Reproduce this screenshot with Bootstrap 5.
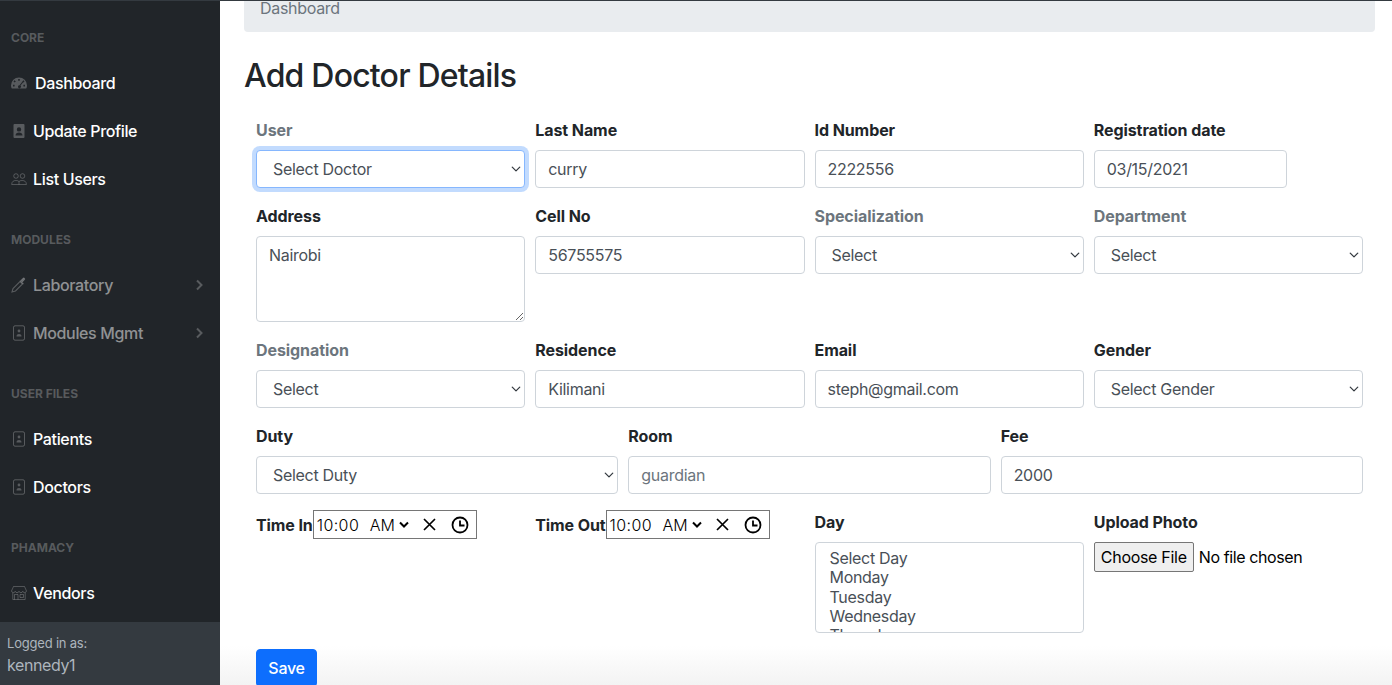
<!doctype html>
<html lang="en">
<head>
<meta charset="utf-8">
<title>Add Doctor Details</title>
<link rel="stylesheet" href="https://cdn.jsdelivr.net/npm/bootstrap@5.3.0/dist/css/bootstrap.min.css">
<style>
html,body{height:100%;overflow:hidden}
body{font-family:Inter,"Liberation Sans",sans-serif;font-size:16px;color:#212529;background:#fff}
.top-edge{height:1px;background:#343a40}
.shell{height:684px}
.side-nav{width:220px;flex:none;background:#212529}
.side-menu{flex:1 1 auto;overflow:hidden}
.side-head{padding:28px 11px 12px;font-size:12px;line-height:18px;font-weight:700;color:rgba(255,255,255,.25);text-transform:uppercase}
.side-link{display:flex;align-items:center;height:48px;padding:0 16px 0 11px;color:#fff;text-decoration:none;font-weight:500;letter-spacing:-.35px}
.side-link.muted{color:rgba(255,255,255,.5)}
.side-ico{width:22px;height:16px;flex:none;color:rgba(255,255,255,.25);display:block}
.side-ico svg{display:block;width:16px;height:16px}
.wide-ico{width:24px}
.side-arrow{margin-left:auto;width:9px;height:12px;color:rgba(255,255,255,.25)}
.side-foot{height:63px;flex:none;background:#343a40;color:#adb5bd;padding:11px 7px 0}
.side-foot div:first-child{font-size:13px;line-height:21px;letter-spacing:-.2px}
.side-foot div:last-child{font-size:16px;line-height:23px;letter-spacing:-.4px}
.main-pane{flex:1 1 auto;min-width:0;overflow:hidden;padding:0 17px 0 24px;background:linear-gradient(to bottom,#fff 0,#fff 645px,#f3f3f3 684px)}
.crumb-bar{margin:-17px 0 25px;padding:12px 16px;height:48px;background:#e9ecef;border-radius:4px;color:#6c757d;line-height:24px;letter-spacing:-.3px}
.page-title{font-size:32px;line-height:38px;font-weight:500;margin:0 0 23px;letter-spacing:-.8px}
.form-wrap{padding:0 12px}
.form-grid{--bs-gutter-x:10px}
.field{margin-bottom:16px}
.field-label{display:block;margin-bottom:8px;font-weight:700;line-height:24px;letter-spacing:-.08px}
.field-label.dim{color:#6c757d}
.form-control,.form-select{height:38px;color:#495057;border-color:#ced4da;border-radius:4px;font-size:16px;letter-spacing:-.3px}
.form-select{padding-left:16px;padding-right:24px;background-position:right 2px center;background-size:12px 10px}
.form-control{padding-left:12px}
.form-control::placeholder{color:#6c757d;opacity:1}
textarea.form-control{height:86px}
.date-box{width:193px}
.focus-select{border-color:#86b7fe;box-shadow:0 0 0 4px rgba(13,110,253,.25)}
.time-line{display:flex;align-items:flex-start}
.time-line .field-label{margin:3px 0 0;white-space:nowrap;letter-spacing:-.1px}
.time-box{width:164px;height:29px;flex:none;border:1px solid #767676;display:flex;align-items:center;padding-left:3px;color:#000;font-size:16px;line-height:1;font-weight:300;position:relative}
.time-val{width:53px;letter-spacing:.4px}
.time-ampm{width:28px}
.time-chev{width:12px;height:8px;margin-right:13px}
.time-x{width:13px;height:13px;margin-right:15px}
.time-clock{width:18px;height:18px}
.day-list{height:91px;padding:5px 12px 1px;overflow:hidden;background-image:none;font-size:16px;color:#495057;letter-spacing:-.3px}
.day-list option{padding:0 2px;height:19.25px;min-height:0;line-height:19.25px}
.file-pick{font-size:16px;color:#000;width:100%;line-height:24px;letter-spacing:-.4px}
.file-pick::file-selector-button{height:30px;width:100px;padding:0;margin-right:5px;font:inherit;letter-spacing:-.3px;color:#000;background:#efefef;border:1px solid #767676;border-radius:2px}
.save-btn{height:38px;width:61px;padding:0;font-weight:500;border-radius:4px;background:#0d6efd;border-color:#0d6efd;letter-spacing:-.3px}
</style>
</head>
<body>
<div class="top-edge"></div>
<div class="shell d-flex">
  <nav class="side-nav d-flex flex-column">
    <div class="side-menu">
      <div class="side-head">Core</div>
      <a class="side-link" href="#"><span class="side-ico wide-ico"><svg viewBox="0 0 16 16" fill="currentColor"><path d="M8 2.500a8 8 0 0 0-8 8c0 1.300.3 2.300.8 3h14.400c.5-.7.8-1.700.8-3a8 8 0 0 0-8-8zm.8 1.600v1.600H7.200V4.100zM3.600 5.300l1.200 1.100-1.100 1.200-1.200-1.200zm8.800 0 1.100 1.100-1.100 1.200-1.200-1.200zM2 9.800h1.600v1.600H2zm10.400 0H14v1.600h-1.600zm-1.100-3.100.9.6-2.700 3.300a1.500 1.500 0 1 1-1-.4z" fill-rule="evenodd"/></svg></span>Dashboard</a>
      <a class="side-link" href="#"><span class="side-ico"><svg viewBox="0 0 16 16" fill="currentColor"><path fill-rule="evenodd" d="M3.500 1h9a1 1 0 0 1 1 1v12a1 1 0 0 1-1 1h-9a1 1 0 0 1-1-1V2a1 1 0 0 1 1-1zM8 4.200a2.200 2.200 0 1 0 0 4.400 2.200 2.200 0 0 0 0-4.400zM4.500 12.500h7c0-1.900-1.500-3-3.500-3s-3.500 1.100-3.500 3z"/></svg></span>Update Profile</a>
      <a class="side-link" href="#"><span class="side-ico"><svg viewBox="0 0 16 16" fill="none" stroke="currentColor" stroke-width=".9"><circle cx="5" cy="5" r="2.300"/><circle cx="11.500" cy="5" r="2.300"/><path d="M.7 13.500c0-2.800 1.700-4 4.300-4 1.300 0 2.300.3 3 1 .7-.7 1.800-1 3.100-1 2.600 0 4.300 1.200 4.300 4zM8 10.500v3"/></svg></span>List Users</a>
      <div class="side-head">Modules</div>
      <a class="side-link muted" href="#"><span class="side-ico"><svg viewBox="0 0 16 16" fill="none" stroke="currentColor" stroke-width="1.100"><path d="M1 15l1-3.500 7-7 2.500 2.500-7 7z"/><path d="M9 3.500l3.500 3.500M11 5l2.500-2.500a1 1 0 0 0-1-1.500L10 3.500" fill="currentColor"/></svg></span>Laboratory<svg class="side-arrow" viewBox="0 0 9 12" fill="none" stroke="currentColor" stroke-width="2"><path d="M2 1.500 6.500 6 2 10.500"/></svg></a>
      <a class="side-link muted" href="#"><span class="side-ico"><svg viewBox="0 0 16 16" fill="none" stroke="currentColor"><rect x="2.500" y=".8" width="11" height="14.400" rx="1.500"/><circle cx="8" cy="6" r="1.400" fill="currentColor" stroke="none"/><path d="M5.500 11.500c0-2 1.100-2.600 2.500-2.600s2.500.6 2.500 2.600z" fill="currentColor" stroke="none"/></svg></span>Modules Mgmt<svg class="side-arrow" viewBox="0 0 9 12" fill="none" stroke="currentColor" stroke-width="2"><path d="M2 1.500 6.500 6 2 10.500"/></svg></a>
      <div class="side-head">User Files</div>
      <a class="side-link" href="#"><span class="side-ico"><svg viewBox="0 0 16 16" fill="none" stroke="currentColor"><rect x="2.500" y=".8" width="11" height="14.400" rx="1.500"/><circle cx="8" cy="6" r="1.400" fill="currentColor" stroke="none"/><path d="M5.500 11.500c0-2 1.100-2.600 2.500-2.600s2.500.6 2.500 2.600z" fill="currentColor" stroke="none"/></svg></span>Patients</a>
      <a class="side-link" href="#"><span class="side-ico"><svg viewBox="0 0 16 16" fill="none" stroke="currentColor"><rect x="2.500" y=".8" width="11" height="14.400" rx="1.500"/><circle cx="8" cy="6" r="1.400" fill="currentColor" stroke="none"/><path d="M5.500 11.500c0-2 1.100-2.600 2.500-2.600s2.500.6 2.500 2.600z" fill="currentColor" stroke="none"/></svg></span>Doctors</a>
      <div class="side-head">Phamacy</div>
      <a class="side-link" href="#"><span class="side-ico"><svg viewBox="0 0 16 16" fill="none" stroke="currentColor" stroke-width=".9"><path d="M2.500 1.500h11L15.500 6a1.900 1.900 0 0 1-3.700.3 2 2 0 0 1-3.800 0 2 2 0 0 1-3.800 0A1.900 1.900 0 0 1 .5 6zM1.800 8v6.500h12.400V8M3.500 14.500V9.500h3.500v5M9 9.500h3.500v3H9z"/></svg></span>Vendors</a>
    </div>
    <div class="side-foot">
      <div>Logged in as:</div>
      <div>kennedy1</div>
    </div>
  </nav>
  <main class="main-pane">
    <div class="crumb-bar">Dashboard</div>
    <h1 class="page-title">Add Doctor Details</h1>
    <form class="form-wrap">
      <div class="row form-grid">
        <div class="col-3 field"><label class="field-label dim">User</label>
          <select class="form-select focus-select"><option>Select Doctor</option></select></div>
        <div class="col-3 field"><label class="field-label">Last Name</label>
          <input class="form-control" type="text" value="curry"></div>
        <div class="col-3 field"><label class="field-label">Id Number</label>
          <input class="form-control" type="text" value="2222556"></div>
        <div class="col-3 field"><label class="field-label">Registration date</label>
          <input class="form-control date-box" type="text" value="03/15/2021"></div>
      </div>
      <div class="row form-grid">
        <div class="col-3 field"><label class="field-label">Address</label>
          <textarea class="form-control">Nairobi</textarea></div>
        <div class="col-3 field"><label class="field-label">Cell No</label>
          <input class="form-control" type="text" value="56755575"></div>
        <div class="col-3 field"><label class="field-label dim">Specialization</label>
          <select class="form-select"><option>Select</option></select></div>
        <div class="col-3 field"><label class="field-label dim">Department</label>
          <select class="form-select"><option>Select</option></select></div>
      </div>
      <div class="row form-grid">
        <div class="col-3 field"><label class="field-label dim">Designation</label>
          <select class="form-select"><option>Select</option></select></div>
        <div class="col-3 field"><label class="field-label">Residence</label>
          <input class="form-control" type="text" value="Kilimani"></div>
        <div class="col-3 field"><label class="field-label">Email</label>
          <input class="form-control" type="text" value="steph@gmail.com"></div>
        <div class="col-3 field"><label class="field-label">Gender</label>
          <select class="form-select"><option>Select Gender</option></select></div>
      </div>
      <div class="row form-grid">
        <div class="col-4 field"><label class="field-label">Duty</label>
          <select class="form-select"><option>Select Duty</option></select></div>
        <div class="col-4 field"><label class="field-label">Room</label>
          <input class="form-control" type="text" placeholder="guardian"></div>
        <div class="col-4 field"><label class="field-label">Fee</label>
          <input class="form-control" type="text" value="2000"></div>
      </div>
      <div class="row form-grid">
        <div class="col-3 field time-line"><label class="field-label">Time In</label>
          <div class="time-box"><span class="time-val">10:00</span><span class="time-ampm">AM</span>
            <svg class="time-chev" viewBox="0 0 12 8" fill="none" stroke="#000" stroke-width="2"><path d="M2 1.500l4 4 4-4"/></svg>
            <svg class="time-x" viewBox="0 0 13 13" fill="none" stroke="#000" stroke-width="1.700"><path d="M1 1l11 11M12 1 1 12"/></svg>
            <svg class="time-clock" viewBox="0 0 18 18" fill="none" stroke="#000" stroke-width="1.800"><circle cx="9" cy="9" r="7.500"/><path d="M9 4.500V9.500h4.500"/></svg></div></div>
        <div class="col-3 field time-line"><label class="field-label">Time Out</label>
          <div class="time-box"><span class="time-val">10:00</span><span class="time-ampm">AM</span>
            <svg class="time-chev" viewBox="0 0 12 8" fill="none" stroke="#000" stroke-width="2"><path d="M2 1.500l4 4 4-4"/></svg>
            <svg class="time-x" viewBox="0 0 13 13" fill="none" stroke="#000" stroke-width="1.700"><path d="M1 1l11 11M12 1 1 12"/></svg>
            <svg class="time-clock" viewBox="0 0 18 18" fill="none" stroke="#000" stroke-width="1.800"><circle cx="9" cy="9" r="7.500"/><path d="M9 4.500V9.500h4.500"/></svg></div></div>
        <div class="col-3 field"><label class="field-label">Day</label>
          <select class="form-select day-list" multiple>
            <option>Select Day</option><option>Monday</option><option>Tuesday</option><option>Wednesday</option><option>Thursday</option><option>Friday</option>
          </select></div>
        <div class="col-3 field"><label class="field-label">Upload Photo</label>
          <input class="file-pick" type="file"></div>
      </div>
      <button type="button" class="btn btn-primary save-btn">Save</button>
    </form>
  </main>
</div>
<script src="https://cdn.jsdelivr.net/npm/bootstrap@5.3.0/dist/js/bootstrap.bundle.min.js"></script>
</body>
</html>
